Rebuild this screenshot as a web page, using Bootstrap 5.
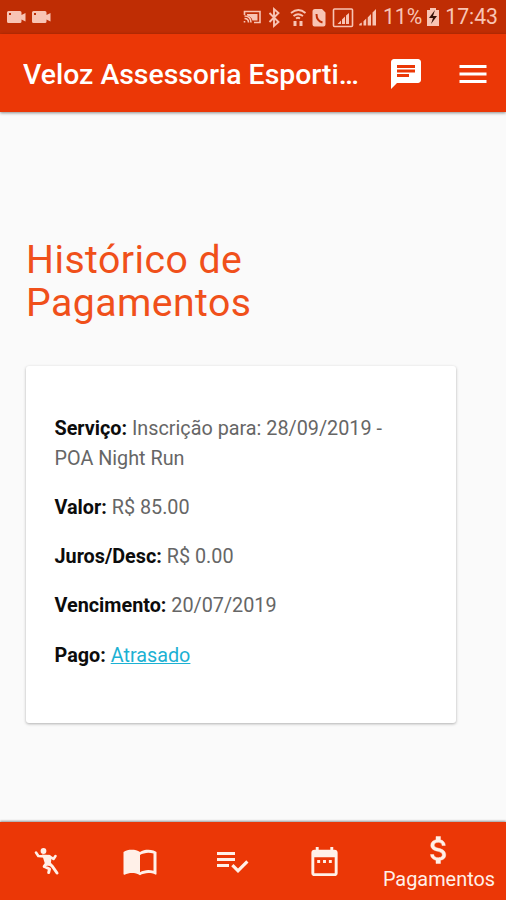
<!DOCTYPE html>
<html lang="pt-BR">
<head>
<meta charset="utf-8">
<meta name="viewport" content="width=device-width, initial-scale=1">
<title>Histórico de Pagamentos</title>
<link href="https://cdn.jsdelivr.net/npm/bootstrap@5.3.0/dist/css/bootstrap.min.css" rel="stylesheet">
<style>
body{font-family:Roboto,"Liberation Sans",sans-serif;background:#fafafa;height:900px;overflow:hidden}
svg{display:block;flex:none;fill:currentColor}
.status-bar{height:34px;background:#bf2d04;color:#f8c4b4;padding:0 8px 0 7px;font-size:21.2px;line-height:36px}
.app-bar{height:78px;background:#eb3706;padding:2px 15px 0 23px;box-shadow:0 1px 3px rgba(0,0,0,.45);flex:none}
.app-title{font-size:28.4px;font-weight:500;line-height:36px;width:337px;padding-top:2px}
.menu-icon{margin-left:31px}
.page-body{padding:127px 50px 0 26px}
.page-title{color:#f0501a;font-size:39.200px;line-height:43px;letter-spacing:.45px;font-weight:400;margin:0 0 41px}
.pay-card{border-radius:3px;height:357px;padding:48px 60px 0 28.500px;box-shadow:0 1px 3px rgba(0,0,0,.3);font-size:19.800px;line-height:29.600px;color:#666;font-weight:400}
.pay-card p{margin:0 0 19.700px}
.pay-card strong{color:#0c0c0c}
.late-link{color:#1cb1d3}
.tab-bar{height:78px;background:#eb3706;box-shadow:0 -1px 2px rgba(0,0,0,.4);padding-left:1px}
.tab-item{width:92.500px;color:#fff0e8}
.tab-active{padding:10px 0 0 1px}
.tab-label{font-size:19.9px;line-height:24px}
.clock{margin-left:1px}
</style>
<script src="https://cdn.jsdelivr.net/npm/bootstrap@5.3.0/dist/js/bootstrap.bundle.min.js"></script>
</head>
<body class="d-flex flex-column">
<div class="status-bar d-flex align-items-center flex-shrink-0">
  <svg width="45" height="14" viewBox="0 0 45 14"><path id="cam" d="M1.500 1h11.500q1.500 0 1.500 1.500v2.500l4-2v8.500l-4-2v2q0 1.500-1.500 1.500h-11.500q-1.500 0-1.500-1.500v-9q0-1.500 1.500-1.500z"/><use href="#cam" x="25"/><path fill="#bf2d04" d="M2 3h2v2h-2zM27 3h2v2h-2z"/></svg>
  <div class="ms-auto d-flex align-items-center">
    <svg width="140" height="26" viewBox="239 4 140 26">
      <g fill="none" stroke="currentColor" stroke-width="1.600">
        <path d="M244.500 15v-3.500h15.500v11h-6M244.500 22.500v-1.500M244.500 18.500q4 0 4 4M244.500 16q6.500 0 6.500 6.500"/>
        <path d="M269.500 13l9 9-4.500 4v-17l4.500 4-9 9" stroke-width="1.900"/>
        <path d="M291 13q7.500-6 14.500 0M293.500 16q4.500-3.500 9.500 0M296 18.500q2-1.500 4 0" stroke-width="1.800"/>
        <rect x="333.500" y="9" width="19" height="17.500" rx="1"/>
      </g>
      <path d="M247 14h10.500v6.500h-5q-1-4-5.500-5zM293.500 21h3v5h-3zM299.500 21h3v5h-3zM315 9h7l3.500 3.500v12q0 2-2 2h-9q-2 0-2-2v-13q0-2.500 2.500-2.500zM349 13v11h-3v-8.500zM345 16.500v7.500h-3v-4.500zM341 20.500v3.500h-3.500zM376 9v16.500h-3.500v-13zM371 14v11.500h-3.300v-8zM366.200 18.500v7h-2.700v-4.300zM361.800 22.500v3h-2.500v-1.500z"/>
      <path fill="none" stroke="#bf2d04" stroke-width="2" d="M316.500 14q0 7 6 8.500"/>
    </svg>
    <span class="ms-1">11%</span>
    <svg class="mx-1" width="14" height="20" viewBox="0 0 14 20"><path d="M4 1h6v2h3v16h-12v-16h3z"/><path fill="#351108" d="M9 3l-6 8h4l-2 6 6-8h-4z"/></svg>
    <span class="clock">17:43</span>
  </div>
</div>
<header class="app-bar d-flex align-items-center text-white">
  <div class="app-title text-truncate">Veloz Assessoria Esportiva</div>
  <svg class="ms-auto" width="36" height="36" viewBox="0 0 24 24"><path d="M20 2H4c-1.100 0-1.990.9-1.990 2L2 22l4-4h14c1.100 0 2-.9 2-2V4c0-1.100-.9-2-2-2zM6 9h12v2H6V9zm8 5H6v-2h8v2zm4-6H6V6h12v2z"/></svg>
  <svg class="menu-icon" width="36" height="36" viewBox="0 0 24 24"><path d="M3 18h18v-2H3v2zm0-5h18v-2H3v2zm0-7v2h18V6H3z"/></svg>
</header>
<main class="page-body flex-grow-1">
  <h1 class="page-title">Histórico de<br>Pagamentos</h1>
  <div class="pay-card bg-white">
    <p><strong>Serviço:</strong> Inscrição para: 28/09/2019 - POA Night Run</p>
    <p><strong>Valor:</strong> R$ 85.00</p>
    <p><strong>Juros/Desc:</strong> R$ 0.00</p>
    <p><strong>Vencimento:</strong> 20/07/2019</p>
    <p><strong>Pago:</strong> <a class="late-link" href="#">Atrasado</a></p>
  </div>
</main>
<nav class="tab-bar d-flex flex-shrink-0">
  <div class="tab-item d-flex align-items-center justify-content-center"><svg width="36" height="36" viewBox="29 843 36 36"><circle cx="43.500" cy="851" r="2.900"/><g fill="none" stroke="currentColor" stroke-linejoin="round" stroke-linecap="round"><path stroke-width="2.600" d="M36 852.500l2.300 3.500 6 .5M49 856l4.500 3 2-3"/><path stroke-width="3" d="M50 864l2.500 2.500 4.500 6.500M46.500 863.500l-2.300 3M44.200 866.500l5.300 2.500-.8 3.500"/></g><path d="M42 854.500l8 .5 1.500 3-1 8-5-.5z"/></svg></div>
  <div class="tab-item d-flex align-items-center justify-content-center"><svg width="36" height="36" viewBox="0 0 24 24"><path d="M21 5c-1.110-.35-2.330-.5-3.500-.5-1.950 0-4.050.4-5.500 1.500-1.450-1.100-3.550-1.500-5.500-1.500S2.450 4.900 1 6v14.650c0 .25.25.5.5.5.1 0 .15-.05.25-.05C3.100 20.450 5.050 20 6.500 20c1.950 0 4.050.4 5.500 1.500 1.350-.85 3.800-1.500 5.500-1.500 1.650 0 3.350.3 4.750 1.050.1.050.15.050.25.050.25 0 .5-.25.5-.5V6c-.6-.45-1.250-.75-2-1zm0 13.500c-1.100-.35-2.300-.5-3.500-.5-1.700 0-4.150.65-5.500 1.500V8c1.350-.85 3.800-1.500 5.500-1.500 1.200 0 2.400.15 3.500.5v11.500z"/></svg></div>
  <div class="tab-item d-flex align-items-center justify-content-center"><svg width="36" height="36" viewBox="0 0 24 24"><path d="M14 10H2v2h12v-2zm0-4H2v2h12V6zM2 16h8v-2H2v2zm19.500-4.500L23 13l-6.990 7-4.510-4.500L13 14l3.010 3 5.490-5.500z"/></svg></div>
  <div class="tab-item d-flex align-items-center justify-content-center"><svg width="35" height="35" viewBox="0 0 24 24"><path d="M9 11H7v2h2v-2zm4 0h-2v2h2v-2zm4 0h-2v2h2v-2zm2-7h-1V2h-2v2H8V2H6v2H5c-1.110 0-1.990.9-1.990 2L3 20c0 1.100.89 2 2 2h14c1.100 0 2-.9 2-2V6c0-1.100-.9-2-2-2zm0 16H5V9h14v11z"/></svg></div>
  <div class="tab-item tab-active flex-grow-1 d-flex flex-column align-items-center"><svg width="36" height="36" viewBox="0 0 24 24"><path stroke="currentColor" stroke-width=".3" d="M11.800 10.900c-2.270-.59-3-1.200-3-2.150 0-1.090 1.010-1.850 2.700-1.850 1.780 0 2.440.85 2.500 2.100h2.210c-.07-1.720-1.120-3.300-3.210-3.810V3h-3v2.160c-1.940.42-3.500 1.680-3.500 3.610 0 2.310 1.910 3.460 4.700 4.130 2.500.6 3 1.480 3 2.410 0 .69-.49 1.790-2.700 1.790-2.060 0-2.870-.92-2.980-2.100h-2.200c.12 2.190 1.760 3.420 3.680 3.830V21h3v-2.150c1.950-.37 3.500-1.500 3.500-3.550 0-2.840-2.430-3.810-4.700-4.400z"/></svg><span class="tab-label">Pagamentos</span></div>
</nav>
</body>
</html>
